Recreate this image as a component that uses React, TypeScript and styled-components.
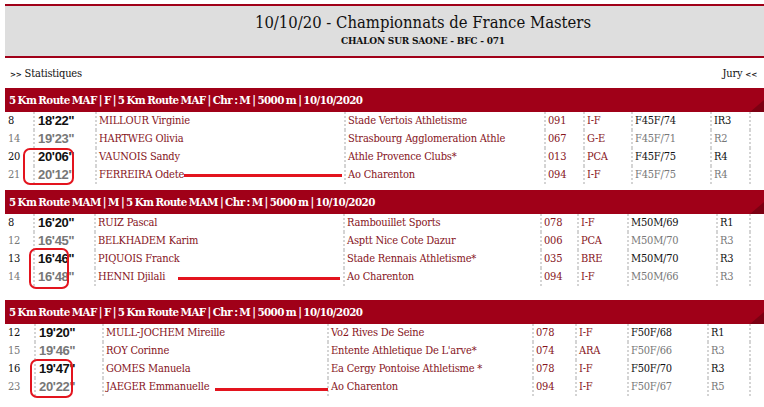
import React from "react";
import styled, { createGlobalStyle } from "styled-components";

const Global = createGlobalStyle`
  html, body { margin: 0; padding: 0; background: #fff; }
  body { width: 764px; height: 407px; overflow: hidden; }
`;

const SLAB = `"DejaVu Serif Condensed", "DejaVu Serif", serif`;
const NARROW = `"Liberation Sans Narrow", "Liberation Sans", sans-serif`;

const Page = styled.div`
  position: relative;
  width: 759px;
  padding: 4px 0 0 5px;
  font-family: ${SLAB};
`;

const Banner = styled.header`
  background: #dedede;
  border-top: 2px solid #a00018;
  border-bottom: 2px solid #a00018;
  height: 47px;
  padding: 0 0 3px 77px;
  display: flex;
  flex-direction: column;
  align-items: center;
  justify-content: center;
  box-sizing: content-box;
`;

const Title = styled.h1`
  margin: 0;
  font-size: 16.5px;
  font-weight: normal;
  color: #111;
  line-height: 21px;
`;

const Subtitle = styled.div`
  font-size: 10px;
  font-weight: bold;
  letter-spacing: -0.2px;
  color: #111;
  line-height: 13px;
  margin-top: 1px;
`;

const Nav = styled.nav`
  display: flex;
  justify-content: space-between;
  align-items: center;
  height: 30px;
  padding: 0 7px 0 5px;
  font-size: 11px;
  letter-spacing: -0.2px;
  color: #111;
`;

const NavLink = styled.span`
  small { font-size: 8px; font-weight: bold; }
`;

const Section = styled.section<{ $top: number }>`
  margin-top: ${(p) => p.$top}px;
`;

const SectionHead = styled.div`
  position: relative;
  background: #a00018;
  color: #fff;
  height: 24px;
  line-height: 24px;
  padding-left: 4px;
  font-size: 11.5px;
  font-weight: bold;
  letter-spacing: -0.6px;
  word-spacing: -1px;
  overflow: hidden;
  &::after {
    content: "";
    position: absolute;
    right: 0;
    bottom: 0;
    width: 0;
    height: 0;
    border-style: solid;
    border-width: 0 0 12px 14px;
    border-color: transparent transparent #7c0012 transparent;
  }
`;

const Row = styled.div<{ $cols: string }>`
  display: grid;
  grid-template-columns: ${(p) => p.$cols};
  height: 18px;
  line-height: 18px;
  font-size: 11px;
  letter-spacing: -0.2px;
`;

const Cell = styled.div<{ $first?: boolean; $tone?: "dark" | "muted" | "red" }>`
  padding-left: ${(p) => (p.$first ? 3 : 2)}px;
  border-left: ${(p) => (p.$first ? "none" : "2px dotted #d4d4d4")};
  white-space: nowrap;
  overflow: hidden;
  color: ${(p) =>
    p.$tone === "red" ? "#86141c" : p.$tone === "muted" ? "#777" : "#111"};
`;

const Time = styled(Cell)`
  font-family: ${NARROW};
  font-weight: bold;
  font-size: 13px;
  letter-spacing: -0.3px;
  padding-left: 3px;
`;

const Mark = styled.div`
  position: absolute;
  border: 2px solid #e3141e;
  border-radius: 7px;
  box-sizing: border-box;
`;

const Stroke = styled.div`
  position: absolute;
  height: 3px;
  background: #e3141e;
`;

type R = [string, string, string, string, string, string, string, string];

const sections: { head: string; cols: string; top: number; rows: R[] }[] = [
  {
    head: "5 Km Route MAF | F | 5 Km Route MAF | Chr : M | 5000 m | 10/10/2020",
    cols: "28px 62px 249px 200px 39px 48px 79px 39px 15px",
    top: 0,
    rows: [
      ["8", "18'22''", "MILLOUR Virginie", "Stade Vertois Athletisme", "091", "I-F", "F45F/74", "IR3"],
      ["14", "19'23''", "HARTWEG Olivia", "Strasbourg Agglomeration Athle", "067", "G-E", "F45F/71", "R2"],
      ["20", "20'06''", "VAUNOIS Sandy", "Athle Provence Clubs*", "013", "PCA", "F45F/75", "R4"],
      ["21", "20'12''", "FERREIRA Odete", "Ao Charenton", "094", "I-F", "F45F/75", "R4"],
    ],
  },
  {
    head: "5 Km Route MAM | M | 5 Km Route MAM | Chr : M | 5000 m | 10/10/2020",
    cols: "28px 61px 249px 197px 37px 50px 89px 33px 15px",
    top: 6,
    rows: [
      ["8", "16'20''", "RUIZ Pascal", "Rambouillet Sports", "078", "I-F", "M50M/69", "R1"],
      ["12", "16'45''", "BELKHADEM Karim", "Asptt Nice Cote Dazur", "006", "PCA", "M50M/70", "R3"],
      ["13", "16'46''", "PIQUOIS Franck", "Stade Rennais Athletisme*", "035", "BRE", "M50M/70", "R3"],
      ["14", "16'48''", "HENNI Djilali", "Ao Charenton", "094", "I-F", "M50M/66", "R3"],
    ],
  },
  {
    head: "5 Km Route MAF | F | 5 Km Route MAF | Chr : M | 5000 m | 10/10/2020",
    cols: "29px 68px 225px 205px 43px 52px 80px 42px 15px",
    top: 14,
    rows: [
      ["12", "19'20''", "MULL-JOCHEM Mireille", "Vo2 Rives De Seine", "078", "I-F", "F50F/68", "R1"],
      ["15", "19'46''", "ROY Corinne", "Entente Athletique De L'arve*", "074", "ARA", "F50F/66", "R3"],
      ["16", "19'47''", "GOMES Manuela", "Ea Cergy Pontoise Athletisme *", "078", "I-F", "F50F/70", "R3"],
      ["23", "20'22''", "JAEGER Emmanuelle", "Ao Charenton", "094", "I-F", "F50F/67", "R5"],
    ],
  },
];

const marks = [
  { x: 23, y: 148, w: 51, h: 37 },
  { x: 29, y: 248, w: 40, h: 41 },
  { x: 30, y: 359, w: 43, h: 39 },
];

const strokes = [
  { x: 184, y: 174, w: 158 },
  { x: 178, y: 277, w: 162 },
  { x: 215, y: 388, w: 113 },
];

export default function App() {
  return (
    <>
      <Global />
      <Page>
        <Banner>
          <Title>10/10/20 - Championnats de France Masters</Title>
          <Subtitle>CHALON SUR SAONE - BFC - 071</Subtitle>
        </Banner>
        <Nav>
          <NavLink>
            <small>&gt;&gt;</small> Statistiques
          </NavLink>
          <NavLink>
            Jury <small>&lt;&lt;</small>
          </NavLink>
        </Nav>
        {sections.map((s, si) => (
          <Section key={si} $top={s.top}>
            <SectionHead>{s.head}</SectionHead>
            {s.rows.map((r, ri) => {
              const tone = ri % 2 === 0 ? "dark" : "muted";
              return (
                <Row key={ri} $cols={s.cols}>
                  <Cell $first $tone={tone}>{r[0]}</Cell>
                  <Time $tone={tone}>{r[1]}</Time>
                  <Cell $tone="red">{r[2]}</Cell>
                  <Cell $tone="red">{r[3]}</Cell>
                  <Cell $tone="red">{r[4]}</Cell>
                  <Cell $tone="red">{r[5]}</Cell>
                  <Cell $tone={tone}>{r[6]}</Cell>
                  <Cell $tone={tone}>{r[7]}</Cell>
                  <Cell />
                </Row>
              );
            })}
          </Section>
        ))}
        {marks.map((m, i) => (
          <Mark key={i} style={{ left: m.x, top: m.y, width: m.w, height: m.h }} />
        ))}
        {strokes.map((s, i) => (
          <Stroke key={i} style={{ left: s.x, top: s.y, width: s.w }} />
        ))}
      </Page>
    </>
  );
}
